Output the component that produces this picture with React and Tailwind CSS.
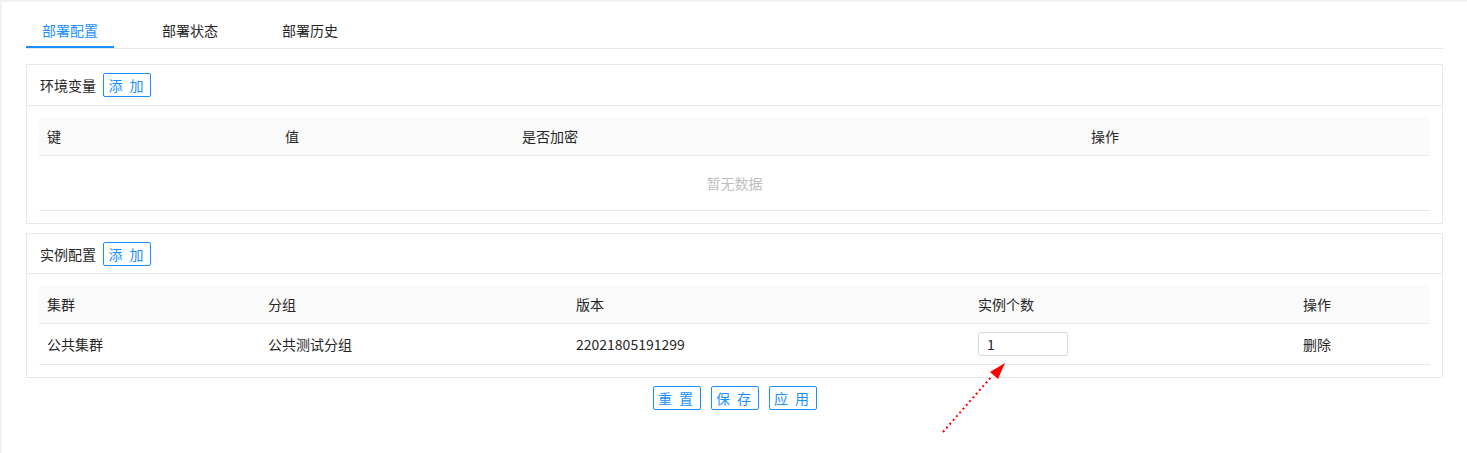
import React, { useState } from 'react';

const TABS = ['部署配置', '部署状态', '部署历史'];

const ENV_COLS = ['键', '值', '是否加密', '操作'];
const INST_COLS = ['集群', '分组', '版本', '实例个数', '操作'];

function OutlineBtn({ children }) {
  return (
    <button className="h-[24px] w-[48px] border border-[#1890ff] rounded-[2px] text-[14px] leading-[20px] text-[#1890ff] bg-white tracking-[2px]">
      {children}
    </button>
  );
}

function Card({ title, headH, children }) {
  return (
    <div className="border border-[#e8e8e8] bg-white">
      <div className={`${headH} flex items-center gap-[7px] pl-[13px] border-b border-[#e8e8e8]`}>
        <span className="text-[14px] leading-[20px] text-[#262626]">{title}</span>
        <OutlineBtn>添 加</OutlineBtn>
      </div>
      <div className="pt-[11px] px-[12px] pb-[12px]">{children}</div>
    </div>
  );
}

export default function App() {
  const [tab, setTab] = useState(0);
  const [count, setCount] = useState('1');

  const envGrid = 'grid grid-cols-[238px_237px_569px_348px] items-center';
  const instGrid = 'grid grid-cols-[221px_308px_402px_325px_136px] items-center';

  return (
    <div className="h-[453px] bg-[#f0f2f5] pt-[2px] pl-[2px] overflow-hidden" style={{ fontFamily: '"Noto Sans CJK SC", "Liberation Sans", sans-serif' }}>
      <div className="relative h-full bg-white pt-[10px] px-[24px]">
        <div className="flex border-b border-[#e8e8e8]">
          {TABS.map((t, i) => (
            <div key={t} onClick={() => setTab(i)}
              className={`mr-[32px] px-[16px] h-[36px] pt-[8px] border-b-2 text-[14px] leading-[20px] cursor-pointer ${tab === i ? 'border-[#1890ff] text-[#1890ff]' : 'border-transparent text-[#262626]'}`}>
              {t}
            </div>
          ))}
        </div>

        <div className="mt-[15px]">
          <Card title="环境变量" headH="h-[41px]">
            <div className="text-[14px] leading-[20px] text-[#262626]">
              <div className={`${envGrid} h-[39px] bg-[#fafafa] border-b border-[#e8e8e8]`}>
                {ENV_COLS.map((c) => <div key={c} className="px-[8px]">{c}</div>)}
              </div>
              <div className="h-[55px] flex items-center justify-center border-b border-[#e8e8e8] text-[#bfbfbf]">暂无数据</div>
            </div>
          </Card>
        </div>

        <div className="mt-[9px]">
          <Card title="实例配置" headH="h-[40px]">
            <div className="text-[14px] leading-[20px] text-[#262626]">
              <div className={`${instGrid} h-[39px] bg-[#fafafa] border-b border-[#e8e8e8]`}>
                {INST_COLS.map((c, i) => <div key={i} className="px-[8px]">{c}</div>)}
              </div>
              <div className={`${instGrid} h-[41px] border-b border-[#e8e8e8]`}>
                <div className="px-[8px]">公共集群</div>
                <div className="px-[8px]">公共测试分组</div>
                <div className="px-[8px]">22021805191299</div>
                <div className="px-[8px]">
                  <input value={count} onChange={(e) => setCount(e.target.value)}
                    className="block w-[90px] h-[24px] border border-[#d9d9d9] rounded-[2px] px-[8px] text-[14px] leading-[20px] text-[#262626] outline-none" />
                </div>
                <div className="px-[8px]">删除</div>
              </div>
            </div>
          </Card>
        </div>

        <div className="mt-[8px] flex justify-center gap-[10px]">
          <OutlineBtn>重 置</OutlineBtn>
          <OutlineBtn>保 存</OutlineBtn>
          <OutlineBtn>应 用</OutlineBtn>
        </div>

        {/* red dotted annotation arrow */}
        <svg className="absolute left-[926px] top-[348px]" width="90" height="95" viewBox="928 350 90 95">
          <line x1="943" y1="432" x2="992" y2="376" stroke="#ff0000" strokeWidth="2" strokeDasharray="2 3" />
          <polygon points="1005,363 990,372 998,379" fill="#ff0000" />
        </svg>
      </div>
    </div>
  );
}
